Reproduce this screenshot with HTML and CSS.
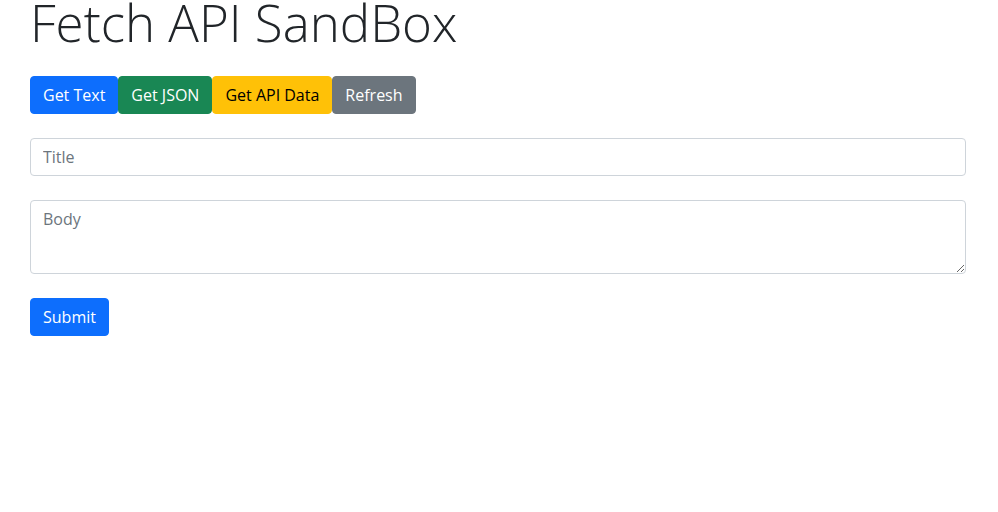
FILE: index.html
```html
<!DOCTYPE html>
<html lang="en">
<head>
<meta charset="utf-8">
<title>Fetch API SandBox</title>
<link rel="stylesheet" href="styles.css">
</head>
<body>
<main class="page">
  <h1 class="title">Fetch API SandBox</h1>
  <div class="btn-row">
    <button class="btn btn-primary">Get Text</button><button class="btn btn-success">Get JSON</button><button class="btn btn-warning">Get API Data</button><button class="btn btn-secondary">Refresh</button>
  </div>
  <form class="post-form">
    <input class="form-control" type="text" placeholder="Title">
    <textarea class="form-control form-area" placeholder="Body"></textarea>
    <div><button type="button" class="btn btn-primary">Submit</button></div>
  </form>
</main>
</body>
</html>
```
FILE: styles.css
```css
* { box-sizing: border-box; }
html, body { margin: 0; padding: 0; background: #fff; }
body {
  font-family: "Open Sans", "Noto Sans", sans-serif;
  font-size: 16px;
  line-height: 1.5;
  color: #212529;
}
.page {
  padding: 0 32px 0 30px;
}
.title {
  margin: 0 0 16px 0;
  height: 60px;
  font-size: 51px;
  font-weight: 300;
  line-height: 44px;
  color: #212529;
}
.btn-row {
  display: flex;
  margin-bottom: 24px;
}
.btn {
  font-family: inherit;
  font-size: 16px;
  line-height: 24px;
  padding: 6px 12px;
  border: 1px solid transparent;
  border-radius: 4px;
  color: #fff;
  cursor: pointer;
}
.btn-primary { background: #0d6efd; border-color: #0d6efd; }
.btn-success { background: #198754; border-color: #198754; }
.btn-warning { background: #ffc107; border-color: #ffc107; color: #000; }
.btn-secondary { background: #6c757d; border-color: #6c757d; }
.post-form {
  display: flex;
  flex-direction: column;
  gap: 24px;
}
.form-control {
  display: block;
  width: 100%;
  height: 38px;
  padding: 6px 12px;
  font-family: inherit;
  font-size: 16px;
  line-height: 24px;
  color: #212529;
  background: #fff;
  border: 1px solid #ced4da;
  border-radius: 4px;
}
.form-control::placeholder { color: #6c757d; }
.form-area {
  height: 74px;
  resize: vertical;
}
```
